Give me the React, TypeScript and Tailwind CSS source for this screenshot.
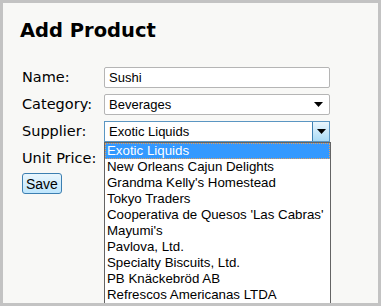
const suppliers = [
  'Exotic Liquids',
  'New Orleans Cajun Delights',
  "Grandma Kelly's Homestead",
  'Tokyo Traders',
  "Cooperativa de Quesos 'Las Cabras'",
  "Mayumi's",
  'Pavlova, Ltd.',
  'Specialty Biscuits, Ltd.',
  'PB Knäckebröd AB',
  'Refrescos Americanas LTDA',
];

const Arrow = () => (
  <svg width="9" height="5" viewBox="0 0 9 5">
    <path d="M0 0h9L4.5 5z" fill="#000" />
  </svg>
);

export default function App() {
  return (
    <div className="relative h-[306px] w-[381px] overflow-hidden border-[3px] border-[#c3c3c3] bg-[#f8f8f6] font-['DejaVu_Sans',sans-serif] text-black">
      <h1 className="ml-[17px] mt-[14px] text-[19.5px] font-bold leading-[28px]">Add Product</h1>

      <div className="ml-[19px] mt-[22px] grid grid-cols-[82px_226px] items-center gap-y-[5px] text-[14.5px]">
        <label>Name:</label>
        <div className="flex h-[21px] items-center rounded-[2px] border border-[#b5b5b5] bg-white px-[4px] font-['Liberation_Sans',sans-serif] text-[13px]">
          Sushi
        </div>

        <label>Category:</label>
        <div className="flex h-[21px] items-center justify-between rounded-[2px] border border-[#b5b5b5] bg-white pl-[4px] pr-[6px] font-['Liberation_Sans',sans-serif] text-[13px]">
          Beverages
          <Arrow />
        </div>

        <label>Supplier:</label>
        <div className="flex h-[21px] items-stretch justify-between border border-[#5b96c2] bg-white pl-[4px] font-['Liberation_Sans',sans-serif] text-[13px]">
          <span className="self-center">Exotic Liquids</span>
          <span className="flex w-[17px] items-center justify-center border-l border-[#3c7fb1] bg-gradient-to-b from-[#eaf6fd] to-[#a9dbf6]">
            <Arrow />
          </span>
        </div>

        <label className="mt-[1px]">Unit Price:</label>
        <div />
      </div>

      <button className="ml-[19px] mt-[3px] h-[21px] rounded-[3px] border border-[#3c7fb1] bg-gradient-to-b from-[#eaf6fd] to-[#bee6fd] px-[3px] font-['Liberation_Sans',sans-serif] text-[14px] leading-[18px]">
        Save
      </button>

      <ul className="absolute left-[101px] top-[139px] w-[227px] border border-[#646464] bg-white font-['Liberation_Sans',sans-serif] text-[13.3px]">
        {suppliers.map((s, i) => (
          <li
            key={s}
            className={
              i === 0
                ? 'h-[16px] bg-[#3399ff] pl-[2px] leading-[16px] text-white outline-1 outline-dotted outline-[#e0a060] -outline-offset-1'
                : 'h-[16px] pl-[2px] leading-[16px]'
            }
          >
            {s}
          </li>
        ))}
      </ul>
    </div>
  );
}
